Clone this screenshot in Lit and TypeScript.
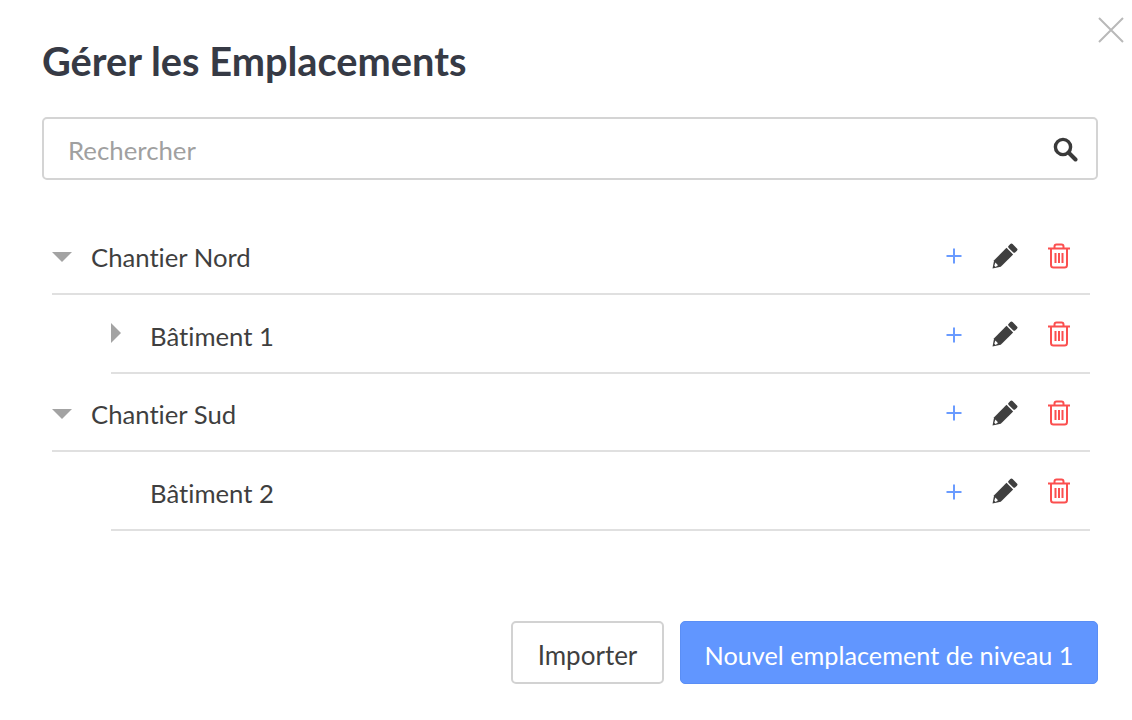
import { LitElement, html, css } from "lit";
import { customElement } from "lit/decorators.js";

const plus = html`<svg class="ic plus" width="18" height="18" viewBox="0 0 18 18"><path d="M9 1.500v15M1.500 9h15" stroke="#6a9bff" stroke-width="2" fill="none"/></svg>`;
const pencil = html`<svg class="ic pencil" width="28" height="28" viewBox="0 0 28 28"><g transform="translate(1.500 26.500) rotate(-45)"><path fill="#3f3f3f" d="M0 0L7 -4.700H24.500V4.700H7Z"/><rect x="26" y="-4.700" width="5.500" height="9.400" rx="1.600" fill="#3f3f3f"/><path fill="#fff" d="M3.200 -.6L6.200 -2.200V1.600L3.200 1.200Z"/></g></svg>`;
const trash = html`<svg class="ic trash" width="24" height="26" viewBox="0 0 24 26"><g fill="none" stroke="#fb4f4f" stroke-width="2"><path d="M1 5.500h22M4 5.500v16.500a2.500 2.500 0 0 0 2.500 2.500h11a2.500 2.500 0 0 0 2.500-2.500V5.500M7.500 5.500V3.500a2 2 0 0 1 2-2h5a2 2 0 0 1 2 2v2M8.500 10v10M12 10v10M15.500 10v10"/></g></svg>`;

const rows = [
  { label: "Chantier Nord", level: 0, caret: "down" },
  { label: "Bâtiment 1", level: 1, caret: "right" },
  { label: "Chantier Sud", level: 0, caret: "down" },
  { label: "Bâtiment 2", level: 1, caret: "" },
];

@customElement("app-root")
export class AppRoot extends LitElement {
  static styles = css`
    :host { display: block; width: 1132px; height: 720px; background: #fff; position: relative; font-family: Lato, sans-serif; color: #3f3f3f; overflow: hidden; font-variant-ligatures: none; }
    .modal { padding: 37px 34px 36px 42px; display: flex; flex-direction: column; height: 720px; box-sizing: border-box; }
    h1 { margin: 0; font-size: 39.75px; line-height: 47px; font-weight: 700; color: #363a45; }
    .close { position: absolute; left: 1098px; top: 17px; }
    .search { margin-top: 33px; height: 63px; box-sizing: border-box; border: 2px solid #d4d4d4; border-radius: 5px; display: flex; align-items: center; justify-content: space-between; padding: 2px 18px 0 24px; }
    .search span { font-size: 25.8px; color: #a0a0a0; }
    .search svg { margin-top: -2px; }
    .tree { margin: 36.5px 8px 0 10px; display: flex; flex-direction: column; }
    .row { height: 78.5px; box-sizing: border-box; border-bottom: 2px solid #e0e0e0; display: flex; align-items: center; padding-top: 5px; }
    .row.l1 { margin-left: 59px; }
    .caret { width: 39px; flex: none; display: flex; }
    .row.l1 .caret { padding-bottom: 6px; }
    .label { font-size: 25.7px; flex: 1; }
    .actions { display: flex; align-items: center; }
    .ic { display: block; flex: none; }
    .plus { margin-right: 28px; margin-top: -2px; }
    .pencil { margin-right: 28px; margin-top: -3px; }
    .trash { margin-right: 19px; margin-top: -3px; }
    .footer { margin-top: auto; display: flex; justify-content: flex-end; gap: 16px; }
    button { font: inherit; font-variant-ligatures: none; font-size: 25.25px; height: 63px; border-radius: 5px; box-sizing: border-box; padding: 5px 0 0; }
    .imp { width: 153px; background: #fff; border: 2px solid #d2d2d2; color: #3f3f3f; font-size: 26px; }
    .new { width: 418px; background: #6196ff; border: 1px solid #5a8ef5; color: #fff; }
  `;

  caret(kind: string) {
    if (kind === "down") return html`<div class="caret"><svg width="20" height="11" viewBox="0 0 20 11"><path d="M0 0h20L10 10z" fill="#a3a3a3"/></svg></div>`;
    if (kind === "right") return html`<div class="caret"><svg width="10" height="20" viewBox="0 0 10 20"><path d="M0 0l10 10L0 20z" fill="#a3a3a3"/></svg></div>`;
    return html`<div class="caret"></div>`;
  }

  render() {
    return html`<div class="modal">
      <svg class="close" width="26" height="26" viewBox="0 0 26 26"><path d="M1 1l24 24M25 1L1 25" stroke="#b9b9b9" stroke-width="2" fill="none"/></svg>
      <h1>Gérer les Emplacements</h1>
      <div class="search"><span>Rechercher</span>
        <svg width="26" height="26" viewBox="0 0 26 26"><circle cx="11" cy="11" r="7.600" fill="none" stroke="#3a3a3a" stroke-width="3.400"/><path d="M16.500 16.500l7 7" stroke="#3a3a3a" stroke-width="4" stroke-linecap="round"/></svg>
      </div>
      <div class="tree">
        ${rows.map((r) => html`<div class="row ${r.level ? "l1" : ""}">
          ${this.caret(r.caret)}
          <div class="label">${r.label}</div>
          <div class="actions">${plus}${pencil}${trash}</div>
        </div>`)}
      </div>
      <div class="footer"><button class="imp">Importer</button><button class="new">Nouvel emplacement de niveau 1</button></div>
    </div>`;
  }
}
